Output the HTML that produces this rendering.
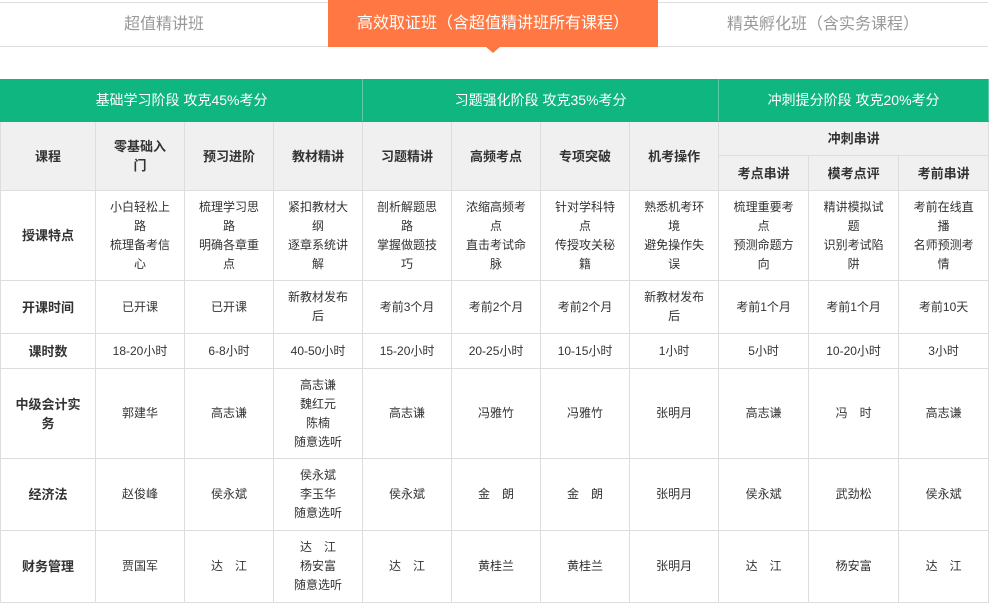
<!DOCTYPE html>
<html><head><meta charset="utf-8"><style>
body{margin:0;width:991px;height:600px;overflow:hidden;background:#fff;font-family:"Liberation Sans","Noto Sans CJK SC",sans-serif;}
.tabs{position:absolute;top:2px;left:0;width:988px;height:43px;border-top:1px solid #ddd;border-bottom:1px solid #ddd;}
.tab{position:absolute;top:0;height:43px;line-height:43px;text-align:center;font-size:16px;color:#999;}
.on{background:#ff7843;color:#fff;top:-3px;height:47px;line-height:47px;}
.on:after{content:"";position:absolute;left:158px;bottom:-6px;border-left:7px solid transparent;border-right:7px solid transparent;border-top:6px solid #ff7843;}
table{position:absolute;left:0;top:79px;border-collapse:collapse;table-layout:fixed;width:989px;}
td{border:1px solid #ddd;text-align:center;font-size:12px;color:#333;line-height:19px;padding:0 12px;}
tr.g td{background:#10b67f;color:#fff;font-size:14px;height:41px;border-color:#10b67f;border-right-color:#5ccaa4;}
tr.h td{background:#f0f0f0;font-weight:bold;font-size:13px;color:#333;}
td.f{font-weight:bold;font-size:13px;padding:0 12px;}
</style></head><body>
<div class="tabs">
<div class="tab" style="left:0;width:328px">超值精讲班</div>
<div class="tab on" style="left:328px;width:330px">高效取证班（含超值精讲班所有课程）</div>
<div class="tab" style="left:658px;width:330px">精英孵化班（含实务课程）</div>
</div>
<table>
<colgroup><col style="width:95px"><col style="width:89px"><col style="width:89px"><col style="width:89px"><col style="width:89px"><col style="width:89px"><col style="width:89px"><col style="width:89px"><col style="width:90px"><col style="width:90px"><col style="width:90px"></colgroup>
<tr class="g"><td colspan="4">基础学习阶段 攻克45%考分</td><td colspan="4">习题强化阶段 攻克35%考分</td><td colspan="3">冲刺提分阶段 攻克20%考分</td></tr>
<tr class="h" style="height:34px"><td rowspan="2">课程</td><td rowspan="2">零基础入门</td><td rowspan="2">预习进阶</td><td rowspan="2">教材精讲</td><td rowspan="2">习题精讲</td><td rowspan="2">高频考点</td><td rowspan="2">专项突破</td><td rowspan="2">机考操作</td><td colspan="3">冲刺串讲</td></tr>
<tr class="h" style="height:35px"><td>考点串讲</td><td>模考点评</td><td>考前串讲</td></tr>
<tr style="height:90px"><td class="f">授课特点</td><td>小白轻松上路<br>梳理备考信心</td><td>梳理学习思路<br>明确各章重点</td><td>紧扣教材大纲<br>逐章系统讲解</td><td>剖析解题思路<br>掌握做题技巧</td><td>浓缩高频考点<br>直击考试命脉</td><td>针对学科特点<br>传授攻关秘籍</td><td>熟悉机考环境<br>避免操作失误</td><td>梳理重要考点<br>预测命题方向</td><td>精讲模拟试题<br>识别考试陷阱</td><td>考前在线直播<br>名师预测考情</td></tr>
<tr style="height:53px"><td class="f">开课时间</td><td>已开课</td><td>已开课</td><td>新教材发布后</td><td>考前3个月</td><td>考前2个月</td><td>考前2个月</td><td>新教材发布后</td><td>考前1个月</td><td>考前1个月</td><td>考前10天</td></tr>
<tr style="height:35px"><td class="f">课时数</td><td>18-20小时</td><td>6-8小时</td><td>40-50小时</td><td>15-20小时</td><td>20-25小时</td><td>10-15小时</td><td>1小时</td><td>5小时</td><td>10-20小时</td><td>3小时</td></tr>
<tr style="height:90px"><td class="f">中级会计实务</td><td>郭建华</td><td>高志谦</td><td>高志谦<br>魏红元<br>陈楠<br>随意选听</td><td>高志谦</td><td>冯雅竹</td><td>冯雅竹</td><td>张明月</td><td>高志谦</td><td>冯　时</td><td>高志谦</td></tr>
<tr style="height:72px"><td class="f">经济法</td><td>赵俊峰</td><td>侯永斌</td><td>侯永斌<br>李玉华<br>随意选听</td><td>侯永斌</td><td>金　朗</td><td>金　朗</td><td>张明月</td><td>侯永斌</td><td>武劲松</td><td>侯永斌</td></tr>
<tr style="height:72px"><td class="f">财务管理</td><td>贾国军</td><td>达　江</td><td>达　江<br>杨安富<br>随意选听</td><td>达　江</td><td>黄桂兰</td><td>黄桂兰</td><td>张明月</td><td>达　江</td><td>杨安富</td><td>达　江</td></tr>
</table>
</body></html>
